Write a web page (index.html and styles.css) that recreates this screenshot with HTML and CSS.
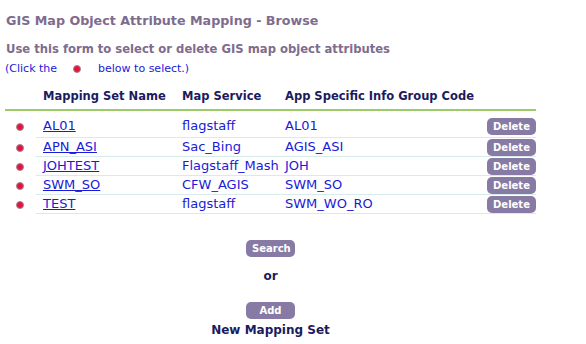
FILE: index.html
```html
<!DOCTYPE html>
<html>
<head>
  <title>GIS Map Object Attribute Mapping - Browse</title>
  <link rel="stylesheet" href="styles.css">
</head>
<body>
  <div class="page">
    <h2 class="title">GIS Map Object Attribute Mapping - Browse</h2>
    <p class="intro">Use this form to select or delete GIS map object attributes</p>
    <p class="hint">(Click the <span class="dot"></span> below to select.)</p>

    <table class="list">
      <thead>
        <tr>
          <th class="sel"></th>
          <th class="name">Mapping Set Name</th>
          <th class="service">Map Service</th>
          <th class="code">App Specific Info Group Code</th>
          <th class="act"></th>
        </tr>
      </thead>
      <tbody>
        <tr>
          <td class="sel"><span class="dot"></span></td>
          <td><a href="#">AL01</a></td>
          <td>flagstaff</td>
          <td>AL01</td>
          <td class="act"><button class="btn">Delete</button></td>
        </tr>
        <tr>
          <td class="sel"><span class="dot"></span></td>
          <td><a href="#">APN_ASI</a></td>
          <td>Sac_Bing</td>
          <td>AGIS_ASI</td>
          <td class="act"><button class="btn">Delete</button></td>
        </tr>
        <tr>
          <td class="sel"><span class="dot"></span></td>
          <td><a href="#">JOHTEST</a></td>
          <td>Flagstaff_Mash</td>
          <td>JOH</td>
          <td class="act"><button class="btn">Delete</button></td>
        </tr>
        <tr>
          <td class="sel"><span class="dot"></span></td>
          <td><a href="#">SWM_SO</a></td>
          <td>CFW_AGIS</td>
          <td>SWM_SO</td>
          <td class="act"><button class="btn">Delete</button></td>
        </tr>
        <tr>
          <td class="sel"><span class="dot"></span></td>
          <td><a href="#">TEST</a></td>
          <td>flagstaff</td>
          <td>SWM_WO_RO</td>
          <td class="act"><button class="btn">Delete</button></td>
        </tr>
      </tbody>
    </table>

    <div class="actions">
      <button class="btn wide">Search</button>
      <div class="or">or</div>
      <button class="btn wide">Add</button>
      <div class="label">New Mapping Set</div>
    </div>
  </div>
</body>
</html>
```

FILE: styles.css
```css
body {
  margin: 0;
  font-family: "DejaVu Sans", Verdana, sans-serif;
  background-color: #fff;
}

.page {
  width: 531px;
  padding: 13px 0 0 5px;
}

.title {
  margin: 0 0 0 1px;
  font-size: 12.7px;
  font-weight: bold;
  color: #7e6c8e;
}

.intro {
  margin: 14px 0 0 1px;
  font-size: 11.6px;
  font-weight: bold;
  color: #7e6c8e;
}

.hint {
  margin: 6px 0 0 0;
  font-size: 11px;
  color: #1a1ad8;
}

.hint .dot {
  margin: 0 14px 0 12px;
}

.dot {
  display: inline-block;
  width: 6px;
  height: 6px;
  background-color: #e8103c;
  border: 1px solid #9a8c96;
  border-radius: 50%;
  vertical-align: middle;
}

.list {
  width: 531px;
  margin-top: 14px;
  border-collapse: collapse;
  table-layout: fixed;
  font-size: 13px;
}

.list th {
  text-align: left;
  font-size: 11.5px;
  font-weight: bold;
  color: #1b1b5e;
  padding: 0 0 6px 7px;
  border-bottom: 2px solid #9ccc6a;
}

.list td {
  height: 18px;
  padding: 0 0 0 7px;
  line-height: 16px;
  color: #1a1ad8;
  border-bottom: 1px solid #d6ecec;
}

.list tbody tr:first-child td {
  height: 22px;
  padding-top: 4px;
}

.list .sel {
  width: 20px;
  padding-left: 11px;
}

.list td.sel {
  border-bottom: none;
}

.list .name {
  width: 132px;
}

.list .service {
  width: 96px;
}

.list .act {
  width: 60px;
  padding-left: 0;
  text-align: right;
}

.list a {
  color: #1a1ad8;
}

.btn {
  font-family: "DejaVu Sans", Verdana, sans-serif;
  font-size: 10px;
  font-weight: bold;
  color: #fff;
  background-color: #877ba5;
  border: none;
  border-radius: 5px;
  padding: 1px 6px;
  height: 17px;
  width: 49px;
  vertical-align: middle;
  cursor: pointer;
}

.list .btn {
  display: block;
  margin-left: auto;
}

.actions {
  display: flex;
  flex-direction: column;
  align-items: center;
  margin-top: 26px;
  font-size: 12px;
  font-weight: bold;
  color: #1b1b5e;
}

.or {
  margin: 12px 0 19px 0;
}

.label {
  margin-top: 4px;
}
```
